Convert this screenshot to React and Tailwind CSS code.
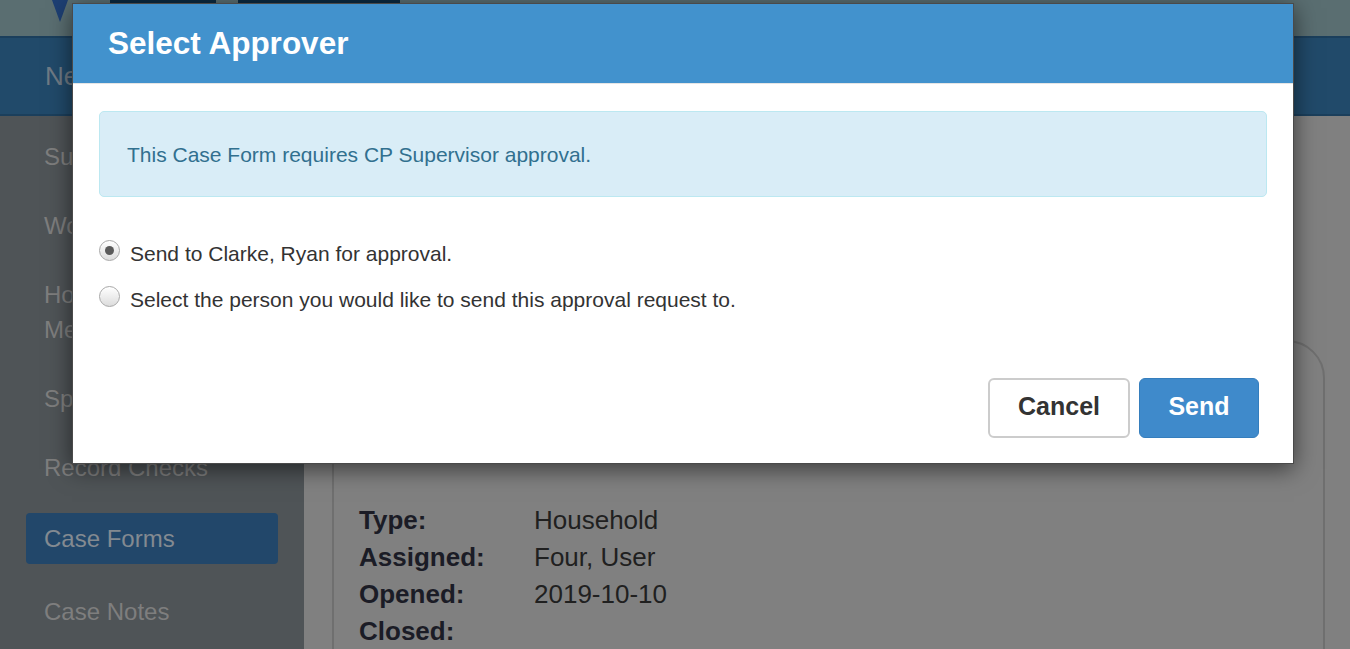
import React, { useState } from 'react';

const SIDE_ITEMS = [
  { label: 'Summary' },
  { label: 'Workers' },
  { label: ['Household', 'Members'] },
  { label: 'Special Needs' },
  { label: 'Record Checks' },
  { label: 'Case Forms', active: true, extra: 'mt-[2px]' },
  { label: 'Case Notes', extra: 'mt-[4px]' },
];

const DETAILS = [
  ['Type:', 'Household'],
  ['Assigned:', 'Four, User'],
  ['Opened:', '2019-10-10'],
  ['Closed:', ''],
];

function Radio({ checked, onClick, children }) {
  return (
    <label onClick={onClick} className="flex h-[30px] cursor-pointer items-center gap-[10px] leading-[30px]">
      <span className="relative -mt-[8px] grid h-[21px] w-[21px] shrink-0 place-items-center rounded-full border border-[#a8a8a8] bg-[linear-gradient(#ffffff,#dcdcdc)] shadow-[inset_0_1px_1px_rgba(255,255,255,0.8)]">
        {checked && <span className="h-[9px] w-[9px] rounded-full bg-[#5a5a5a]" />}
      </span>
      <span>{children}</span>
    </label>
  );
}

export default function App() {
  const [choice, setChoice] = useState('default');

  return (
    <div className="relative h-[649px] w-[1350px] overflow-hidden font-['Liberation_Sans',Arial,sans-serif]">
      {/* page behind the dimmed backdrop */}
      <div className="flex h-full flex-col bg-[#808080]">
        <div className="flex h-[36px] shrink-0 items-start bg-[#5a6e71]">
          <div className="ml-[52px] h-0 w-0 border-x-[8px] border-t-[22px] border-x-transparent border-t-[#1d3f73]" />
          <div className="ml-[42px] flex h-[30px] w-[106px] items-center justify-center rounded-b-[3px] bg-[#0b2a42] text-[20px] text-[#7a8a96]">Home</div>
          <div className="ml-[22px] flex h-[30px] w-[162px] items-center justify-center rounded-b-[3px] bg-[#0b2a42] text-[20px] text-[#7a8a96]">Search ▾</div>
        </div>
        <div className="flex h-[80px] shrink-0 items-center border-y-2 border-y-[#1b3f5c] bg-[#214a6a] px-[45px] text-[26px] text-[#6f7a85]">
          New Case
        </div>
        <div className="flex min-h-0 flex-1">
          <nav className="flex w-[304px] shrink-0 flex-col gap-[18px] bg-[#4f5457] pt-[15px]">
            {SIDE_ITEMS.map((item, i) => (
              <div
                key={i}
                className={
                  'mx-[26px] rounded-[4px] px-[18px] py-[8px] text-[24px] leading-[35px] text-[#7e7e7e] ' +
                  (item.active ? 'bg-[#22476a] text-[#838a91] ' : '') +
                  (item.extra || '')
                }
              >
                {Array.isArray(item.label) ? item.label.map((l) => <div key={l}>{l}</div>) : item.label}
              </div>
            ))}
          </nav>
          <main className="flex-1 pl-[28px] pr-[25px] pt-[224px]">
            <div className="h-[400px] rounded-tr-[38px] border-2 border-[#6f6f6f] px-[25px] pt-[160px]">
              <div className="grid grid-cols-[175px_1fr] text-[26px] leading-[37px] text-[#1b1c26]">
                {DETAILS.map(([k, v]) => (
                  <React.Fragment key={k}>
                    <div className="font-bold">{k}</div>
                    <div className="text-[#202020]">{v}</div>
                  </React.Fragment>
                ))}
              </div>
            </div>
          </main>
        </div>
      </div>

      {/* modal */}
      <div className="absolute left-[72px] top-[3px] w-[1222px] overflow-hidden border border-[#4a4a4a] bg-white shadow-[0_5px_22px_rgba(0,0,0,0.55)]">
        <div className="flex h-[80px] items-center border-b border-[#e5e5e5] bg-[#4292cd] px-[35px]">
          <h3 className="text-[31.5px] font-bold text-white">Select Approver</h3>
        </div>
        <div className="px-[26px] pt-[27px] text-[21px] text-[#333333]">
          <div className="flex h-[86px] items-center rounded-[5px] border border-[#bce8f1] bg-[#d9edf7] px-[27px] pt-[2px] text-[#31708f]">
            This Case Form requires CP Supervisor approval.
          </div>
          <div className="mt-[42px] flex flex-col gap-[16px]">
            <Radio checked={choice === 'default'} onClick={() => setChoice('default')}>
              Send to Clarke, Ryan for approval.
            </Radio>
            <Radio checked={choice === 'other'} onClick={() => setChoice('other')}>
              Select the person you would like to send this approval request to.
            </Radio>
          </div>
        </div>
        <div className="flex justify-end gap-[9px] px-[34px] pb-[25px] pt-[63px]">
          <button type="button" className="h-[60px] w-[142px] rounded-[6px] border-2 border-[#cccccc] bg-white pb-[2px] text-[25px] font-bold text-[#333333]">
            Cancel
          </button>
          <button type="button" className="h-[60px] w-[120px] rounded-[6px] border border-[#357ebd] bg-[#3f8acb] pb-[2px] text-[25px] font-bold text-white">
            Send
          </button>
        </div>
      </div>
    </div>
  );
}
